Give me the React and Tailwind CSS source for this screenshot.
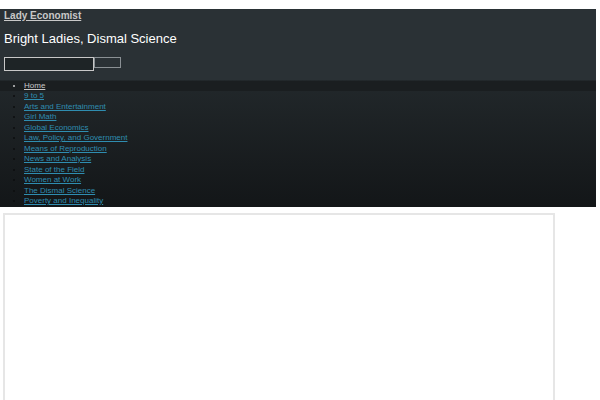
const cats = [
  '9 to 5',
  'Arts and Entertainment',
  'Girl Math',
  'Global Economics',
  'Law, Policy, and Government',
  'Means of Reproduction',
  'News and Analysis',
  'State of the Field',
  'Women at Work',
  'The Dismal Science',
  'Poverty and Inequality',
]

export default function App() {
  return (
    <div className="min-h-[400px] bg-white pt-[9px] font-['Liberation_Sans',Arial,sans-serif]">
      <div className="w-[596px]">
        {/* Header */}
        <div className="bg-[#2a3135] px-[4px] pt-[1px] h-[71px]">
          <a href="#" className="block text-[10px] font-bold leading-[12px] text-[#c8c8c8] underline">Lady Economist</a>
          <h2 className="mt-[9px] text-[13px] leading-[16px] text-white">Bright Ladies, Dismal Science</h2>
          <div className="mt-[10px] flex items-start">
            <input className="w-[90px] h-[14px] border border-[#c8c8c8] bg-[#1e2426]" />
            <button className="w-[27px] h-[11px] border border-[#8a9094] bg-[#2a3135]"></button>
          </div>
        </div>

        {/* Nav */}
        <ul className="bg-gradient-to-b from-[#22282b] to-[#131618] pl-[24px] pt-[0.5px] text-[8px] leading-[10.5px] list-disc">
          <li className="bg-[#1a1e20] shadow-[-24px_0_0_#1a1e20] marker:text-[#c8c8c8] text-[#c8c8c8]">
            <a href="#" className="underline text-[#c8c8c8]">Home</a>
          </li>
          {cats.map((c) => (
            <li key={c} className="marker:text-[#0c0e0f]">
              <a href="#" className="underline text-[#2f8db0]">{c}</a>
            </li>
          ))}
        </ul>
      </div>

      {/* Content box */}
      <div className="mt-[6px] ml-[3px] w-[552px] h-[200px] border-2 border-[#e6e6e6] bg-white"></div>
    </div>
  )
}
